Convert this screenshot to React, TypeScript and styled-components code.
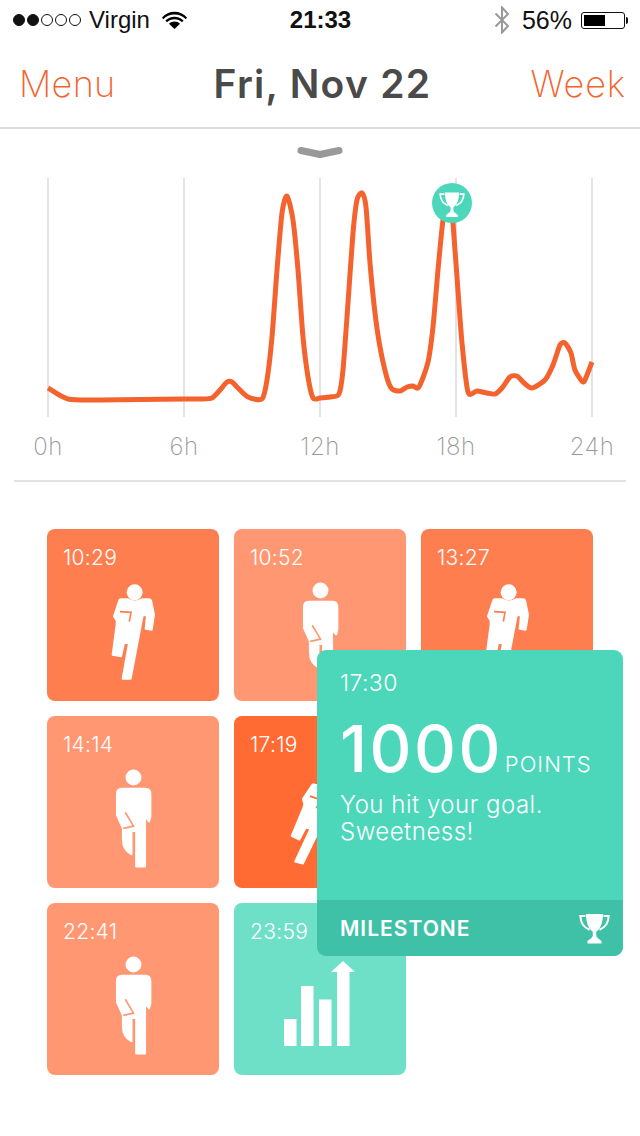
import styled, { createGlobalStyle } from "styled-components";

const GlobalStyle = createGlobalStyle`
  html, body {
    margin: 0;
    padding: 0;
    background: #fff;
    font-family: "Inter", "Liberation Sans", sans-serif;
  }
`;

const Page = styled.div`
  width: 640px;
  height: 1136px;
  overflow: hidden;
`;

const StatusBar = styled.div`
  display: grid;
  grid-template-columns: 1fr auto 1fr;
  align-items: center;
  height: 40px;
  padding: 0 12px 0 13px;
  font-family: "Liberation Sans", sans-serif;
  font-size: 24px;
  color: #111;
`;

const StatusLeft = styled.div`
  display: flex;
  align-items: center;
`;

const StatusRight = styled.div`
  display: flex;
  align-items: center;
  justify-content: flex-end;
  font-size: 25px;
`;

const Signal = styled.div`
  display: flex;
  gap: 2px;
  margin-right: 8px;
`;

const Dot = styled.span<{ $on?: boolean }>`
  width: 10px;
  height: 10px;
  border-radius: 50%;
  border: 1px solid #111;
  background: ${(p) => (p.$on ? "#111" : "#fff")};
`;

const Clock = styled.div`
  font-weight: 700;
  font-size: 24px;
`;

const WifiIcon = styled.svg`
  width: 25px;
  height: 18px;
  margin-left: 12px;
`;

const BluetoothIcon = styled.svg`
  width: 16px;
  height: 28px;
  margin-right: 12px;
`;

const Battery = styled.div`
  position: relative;
  width: 44px;
  height: 17px;
  margin-left: 9px;
  margin-right: 3px;
  padding: 2px;
  box-sizing: border-box;
  border: 1px solid #111;
  border-radius: 3px;

  &::after {
    content: "";
    position: absolute;
    right: -4px;
    top: 4px;
    width: 2px;
    height: 7px;
    background: #111;
    border-radius: 0 2px 2px 0;
  }
`;

const BatteryFill = styled.div`
  height: 100%;
  background: #000;
`;

const NavBar = styled.div`
  display: grid;
  grid-template-columns: 1fr auto 1fr;
  align-items: center;
  height: 87px;
  padding: 0 14px 0 19px;
  border-bottom: 2px solid #dcdcdc;
`;

const NavLink = styled.div<{ $end?: boolean }>`
  justify-self: ${(p) => (p.$end ? "end" : "start")};
  font-size: 36px;
  font-weight: 200;
  letter-spacing: ${(p) => (p.$end ? "0.9px" : "0.3px")};
  color: #f4622d;
`;

const Title = styled.div`
  font-size: 39px;
  font-weight: 600;
  color: #4a4a4a;
  letter-spacing: 1.3px;
`;

const Handle = styled.div`
  display: flex;
  justify-content: center;
  align-items: center;
  height: 49px;
`;

const ChevronIcon = styled.svg`
  width: 46px;
  height: 14px;
  margin-top: -2px;
`;

const ChartSvg = styled.svg`
  display: block;
  width: 640px;
  height: 240px;
  overflow: visible;
`;

const AxisRow = styled.div`
  display: flex;
  justify-content: space-between;
  height: 30px;
  margin-top: 14px;
  padding: 0 48px;
`;

const AxisLabel = styled.div`
  display: flex;
  justify-content: center;
  width: 0;
  font-size: 24px;
  font-weight: 200;
  line-height: 30px;
  letter-spacing: 0.5px;
  color: #999;
  white-space: nowrap;
`;

const Divider = styled.div`
  height: 2px;
  margin: 18px 14px 47px;
  background: #e3e3e3;
`;

const TileGrid = styled.div`
  position: relative;
  display: grid;
  grid-template-columns: repeat(3, 172px);
  grid-auto-rows: 172px;
  gap: 15px;
  margin-left: 47px;
`;

const tones = {
  mid: "#ff7e4f",
  soft: "#ff9872",
  hot: "#ff6b33",
  teal: "#6fe0c8",
};

const Tile = styled.div<{ $tone: keyof typeof tones }>`
  display: flex;
  flex-direction: column;
  align-items: center;
  padding: 17px 16px 16px;
  box-sizing: border-box;
  border-radius: 8px;
  overflow: hidden;
  background: ${(p) => tones[p.$tone]};
  color: ${(p) => tones[p.$tone]};
`;

const TileTime = styled.div`
  align-self: flex-start;
  height: 24px;
  font-size: 21px;
  font-weight: 300;
  line-height: 24px;
  letter-spacing: 0.3px;
  color: #fff;
`;

const WalkerSvg = styled.svg`
  width: 43px;
  height: 103px;
  margin: 11px 2px 0 0;
  flex: none;
`;

const RunnerSvg = styled.svg<{ $lean?: boolean }>`
  width: 47px;
  height: 100px;
  margin: 13px 2px 0 0;
  flex: none;
  transform: ${(p) => (p.$lean ? "translateX(-3px) rotate(15deg)" : "none")};
`;

const GrowthSvg = styled.svg`
  width: 72px;
  height: 86px;
  margin-top: 17px;
  flex: none;
`;

const Popup = styled.div`
  position: absolute;
  left: 270px;
  top: 121px;
  display: flex;
  flex-direction: column;
  width: 306px;
  height: 306px;
  border-radius: 9px;
  overflow: hidden;
  background: #4cd7ba;
  color: #fff;
`;

const PopupBody = styled.div`
  flex: 1;
  padding: 19px 23px 0;
`;

const PopupTime = styled.div`
  font-size: 23px;
  font-weight: 300;
  line-height: 28px;
  letter-spacing: 0.4px;
`;

const Score = styled.div`
  display: flex;
  align-items: baseline;
  margin-top: 14px;
`;

const ScoreValue = styled.div`
  font-size: 65px;
  font-weight: 500;
  line-height: 76px;
  letter-spacing: 2.5px;
`;

const ScoreUnit = styled.div`
  margin-left: 2px;
  font-size: 22px;
  font-weight: 300;
  letter-spacing: 1px;
`;

const PopupText = styled.div`
  margin-top: 4px;
  font-size: 24px;
  font-weight: 300;
  line-height: 27px;
  letter-spacing: 0.5px;
`;

const PopupFooter = styled.div`
  display: flex;
  align-items: center;
  justify-content: space-between;
  height: 56px;
  padding: 0 13px 0 23px;
  background: #3fc1a7;
`;

const FooterLabel = styled.div`
  font-size: 21px;
  font-weight: 600;
  letter-spacing: 1px;
`;

const Trophy = ({ size }: { size: number }) => (
  <svg width={size} height={size} viewBox="0 0 31 30" fill="#fff">
    <path d="M7 0.5H24C24 9 21.5 15.5 17.2 18.2V21.5C17.2 24 20 25.5 22.5 27.5V30H8.5V27.5C11 25.5 13.8 24 13.8 21.5V18.2C9.5 15.5 7 9 7 0.5Z" />
    <path d="M6.5 2.5H1.3C1.6 9 4.6 14 10.5 16.2M24.5 2.5H29.7C29.4 9 26.4 14 20.5 16.2" fill="none" stroke="#fff" strokeWidth="2" />
  </svg>
);

const Walker = () => (
  <WalkerSvg viewBox="210 170 130 310">
    <circle cx="278" cy="198" r="24" fill="#fff" />
    <path
      fill="#fff"
      stroke="#fff"
      strokeWidth="6"
      strokeLinejoin="round"
      d="M243 232H314Q329 232 329 248V316L325 331L318 322V290H313V467H286V360H272V430Q246 418 246 385V352L228 312V248Q228 232 243 232Z"
    />
    <path fill="none" stroke="currentColor" strokeWidth="5" d="M253 303L278 345L247 352" />
  </WalkerSvg>
);

const Runner = ({ lean }: { lean?: boolean }) => (
  <RunnerSvg $lean={lean} viewBox="205 185 141 300">
    <circle cx="282" cy="213" r="24" fill="#fff" />
    <path
      fill="#fff"
      stroke="#fff"
      strokeWidth="6"
      strokeLinejoin="round"
      d="M240 234H262Q282 247 304 234H325Q331 234 332 242L340 280L333 325L315 322L319 282H306L270 472H246L265 365H250L241 405L216 400L228 310V298L220 285L235 240Q236 234 240 234Z"
    />
    <path fill="none" stroke="currentColor" strokeWidth="5" d="M238 271L271 273L266 301" />
  </RunnerSvg>
);

const Growth = () => (
  <GrowthSvg viewBox="0 0 72 86" fill="#fff">
    <rect x="0" y="58" width="12.5" height="27" />
    <rect x="17" y="25" width="12.5" height="60" />
    <rect x="35" y="38.5" width="12.5" height="46.5" />
    <path d="M53 85V11H47L59 0L71 11H65.5V85Z" />
  </GrowthSvg>
);

const points: [number, number][] = [
  [48, 388], [68, 399], [100, 400], [183, 399], [200, 399], [212, 398], [220, 390], [227, 382],
  [232, 382], [238, 388], [248, 397], [262, 399], [267, 380], [272, 337], [277, 270], [282, 213],
  [287, 196], [293, 220], [298, 270], [303, 337], [308, 377], [313, 398], [320, 398], [330, 397],
  [339, 394], [343, 370], [348, 303], [353, 233], [357, 200], [362, 193], [366, 207], [370, 263],
  [375, 313], [380, 347], [387, 378], [392, 389], [400, 391], [407, 387], [413, 386], [419, 387],
  [428, 362], [433, 327], [438, 270], [443, 220], [448, 197], [451, 195], [453, 223], [457, 277],
  [462, 343], [468, 392], [477, 391], [487, 393], [495, 394], [502, 388], [510, 377], [517, 376],
  [523, 382], [532, 388], [545, 380], [553, 365], [560, 345], [565, 343], [571, 353], [575, 370],
  [583, 382], [587, 375], [592, 362],
];

// catmull-rom through the traced points, chart top sits at y=178 on the page
const smoothPath = (pts: [number, number][]) => {
  const p = pts.map(([x, y]) => [x, y - 178]);
  let d = `M${p[0][0]} ${p[0][1]}`;
  for (let i = 0; i < p.length - 1; i++) {
    const a = p[i - 1] || p[i];
    const b = p[i];
    const c = p[i + 1];
    const e = p[i + 2] || c;
    const k = 8; // looser than 6, stops the dips after the steep bits
    const c1x = b[0] + (c[0] - a[0]) / k;
    const c1y = b[1] + (c[1] - a[1]) / k;
    const c2x = c[0] - (e[0] - b[0]) / k;
    const c2y = c[1] - (e[1] - b[1]) / k;
    d += `C${c1x} ${c1y} ${c2x} ${c2y} ${c[0]} ${c[1]}`;
  }
  return d;
};

const hours = [
  { label: "0h", x: 48 },
  { label: "6h", x: 184 },
  { label: "12h", x: 320 },
  { label: "18h", x: 456 },
  { label: "24h", x: 592 },
];

const App = () => {
  return (
    <Page>
      <GlobalStyle />
      <StatusBar>
        <StatusLeft>
          <Signal>
            <Dot $on />
            <Dot $on />
            <Dot />
            <Dot />
            <Dot />
          </Signal>
          Virgin
          <WifiIcon viewBox="0 0 25 18">
            <path d="M12.5 3.4C8 3.4 4 5.2 1.2 8.2L0 6.4C3.3 2.8 7.7 0.8 12.5 0.8S21.7 2.8 25 6.4L23.8 8.2C21 5.2 17 3.4 12.5 3.4Z" />
            <path d="M12.5 8.3C9.6 8.3 7 9.4 5 11.3L3.4 9.4C5.8 7.1 9 5.7 12.5 5.7S19.2 7.1 21.6 9.4L20 11.3C18 9.4 15.4 8.3 12.5 8.3Z" />
            <path d="M12.5 18L7 12.8C8.4 11.4 10.4 10.5 12.5 10.5S16.6 11.4 18 12.8Z" />
          </WifiIcon>
        </StatusLeft>
        <Clock>21:33</Clock>
        <StatusRight>
          <BluetoothIcon viewBox="0 0 16 28">
            <path d="M1.5 7.5L14 20L8 26.5V1.5L14 8L1.5 20.5" fill="none" stroke="#999" strokeWidth="2" />
          </BluetoothIcon>
          56%
          <Battery>
            <BatteryFill style={{ width: "56%" }} />
          </Battery>
        </StatusRight>
      </StatusBar>

      <NavBar>
        <NavLink>Menu</NavLink>
        <Title>Fri, Nov 22</Title>
        <NavLink $end>Week</NavLink>
      </NavBar>

      <Handle>
        <ChevronIcon viewBox="0 0 46 14">
          <path d="M4 4.5L23 8.5L42 4.5" fill="none" stroke="#999" strokeWidth="7" strokeLinecap="round" strokeLinejoin="round" />
        </ChevronIcon>
      </Handle>

      <ChartSvg viewBox="0 0 640 240">
        {hours.map((h) => (
          <rect key={h.label} x={h.x - 1} y="0" width="2" height="239" fill="#e3e3e3" />
        ))}
        <path d={smoothPath(points)} fill="none" stroke="#f4622d" strokeWidth="5" strokeLinejoin="round" />
        <circle cx="452" cy="25" r="20" fill="#4cd7ba" />
        <svg x="439" y="14" width="26" height="25" viewBox="0 0 31 30" fill="#fff">
          <path d="M7 0.5H24C24 9 21.5 15.5 17.2 18.2V21.5C17.2 24 20 25.5 22.5 27.5V30H8.5V27.5C11 25.5 13.8 24 13.8 21.5V18.2C9.5 15.5 7 9 7 0.5Z" />
          <path d="M6.5 2.5H1.3C1.6 9 4.6 14 10.5 16.2M24.5 2.5H29.7C29.4 9 26.4 14 20.5 16.2" fill="none" stroke="#fff" strokeWidth="2" />
        </svg>
      </ChartSvg>

      <AxisRow>
        {hours.map((h) => (
          <AxisLabel key={h.label}>{h.label}</AxisLabel>
        ))}
      </AxisRow>
      <Divider />

      <TileGrid>
        <Tile $tone="mid">
          <TileTime>10:29</TileTime>
          <Runner />
        </Tile>
        <Tile $tone="soft">
          <TileTime>10:52</TileTime>
          <Walker />
        </Tile>
        <Tile $tone="mid">
          <TileTime>13:27</TileTime>
          <Runner />
        </Tile>
        <Tile $tone="soft">
          <TileTime>14:14</TileTime>
          <Walker />
        </Tile>
        <Tile $tone="hot">
          <TileTime>17:19</TileTime>
          <Runner lean />
        </Tile>
        <div />
        <Tile $tone="soft">
          <TileTime>22:41</TileTime>
          <Walker />
        </Tile>
        <Tile $tone="teal">
          <TileTime>23:59</TileTime>
          <Growth />
        </Tile>

        <Popup>
          <PopupBody>
            <PopupTime>17:30</PopupTime>
            <Score>
              <ScoreValue>1000</ScoreValue>
              <ScoreUnit>POINTS</ScoreUnit>
            </Score>
            <PopupText>
              You hit your goal.
              <br />
              Sweetness!
            </PopupText>
          </PopupBody>
          <PopupFooter>
            <FooterLabel>MILESTONE</FooterLabel>
            <Trophy size={31} />
          </PopupFooter>
        </Popup>
      </TileGrid>
    </Page>
  );
};

export default App;
